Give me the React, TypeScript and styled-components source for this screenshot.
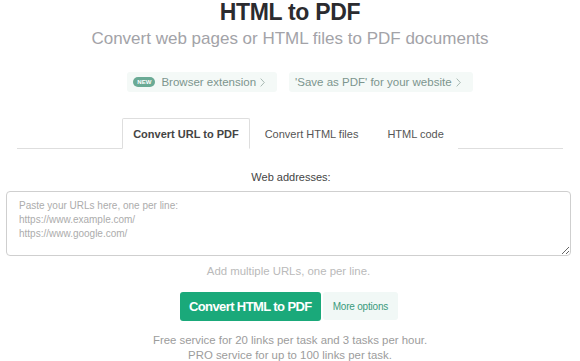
import React from "react";
import styled, { createGlobalStyle } from "styled-components";

const Global = createGlobalStyle`
  html, body { margin: 0; padding: 0; background: #fff; }
  body { font-family: "Liberation Sans", Arial, sans-serif; }
  * { box-sizing: border-box; }
`;

const Page = styled.div`
  width: 580px;
  display: flex;
  flex-direction: column;
  align-items: stretch;
`;

const Title = styled.h1`
  margin: 0;
  font-size: 23px;
  line-height: 24px;
  font-weight: 700;
  color: #2b2b2f;
  text-align: center;
  letter-spacing: -0.3px;
`;

const Subtitle = styled.p`
  margin: 5px 0 0;
  font-size: 17px;
  line-height: 20px;
  color: #a3a3a8;
  text-align: center;
`;

const Links = styled.div`
  display: flex;
  justify-content: center;
  gap: 12px;
  margin-top: 23px;
  padding-left: 20px;
`;

const Pill = styled.a`
  display: flex;
  align-items: center;
  gap: 4px;
  height: 20px;
  padding: 0 12px 0 6px;
  background: #f4f9f7;
  border-radius: 3px;
  color: #7c958e;
  font-size: 11.5px;
  text-decoration: none;
`;

const NewBadge = styled.span`
  display: inline-flex;
  align-items: center;
  justify-content: center;
  width: 22px;
  height: 10px;
  margin-right: 2px;
  border-radius: 5px;
  background: #6aaa95;
  color: #fff;
  font-size: 6px;
  font-weight: 700;
  letter-spacing: 0.2px;
`;

const Chevron = () => (
  <svg width="5" height="9" viewBox="0 0 5 9" fill="none">
    <path d="M0.7 0.6 L4.3 4.5 L0.7 8.4" stroke="#9fb2ac" strokeWidth="0.9" />
  </svg>
);

const Tabs = styled.div`
  display: flex;
  justify-content: center;
  margin: 26px 17px 0 17px;
  border-bottom: 1px solid #dedede;
`;

const Tab = styled.div<{ $active?: boolean }>`
  height: 31px;
  display: flex;
  align-items: center;
  padding: ${(p) => (p.$active ? "0 10px" : "0 13px 0 14px")};
  margin-bottom: -1px;
  font-size: 11px;
  font-weight: ${(p) => (p.$active ? 700 : 400)};
  color: ${(p) => (p.$active ? "#444" : "#555")};
  background: #fff;
  border: 1px solid ${(p) => (p.$active ? "#dedede" : "transparent")};
  border-bottom-color: ${(p) => (p.$active ? "#fff" : "transparent")};
  border-radius: 2px 2px 0 0;
`;

const Label = styled.div`
  margin-top: 21px;
  font-size: 11px;
  line-height: 14px;
  color: #444;
  text-align: center;
  padding-left: 2px;
`;

const AreaWrap = styled.div`
  padding: 0 9px 0 6px;
  margin-top: 7px;
`;

const Area = styled.textarea`
  display: block;
  width: 100%;
  height: 65px;
  resize: vertical;
  border: 1px solid #cfcfcf;
  border-radius: 4px;
  padding: 7px 12px;
  font-family: "Liberation Sans", Arial, sans-serif;
  font-size: 10px;
  line-height: 14px;
  color: #444;
  &::placeholder { color: #acacac; }
`;

const Hint = styled.div`
  margin-top: 8px;
  font-size: 11.4px;
  line-height: 14px;
  color: #bababa;
  text-align: center;
  padding-right: 3px;
`;

const Actions = styled.div`
  display: flex;
  justify-content: center;
  gap: 2px;
  margin-top: 14px;
  padding-right: 2px;
`;

const MainButton = styled.button`
  height: 29px;
  padding: 0 9px;
  border: none;
  border-radius: 3px;
  background: #1aa97a;
  color: #fff;
  font-family: "Liberation Sans", Arial, sans-serif;
  font-size: 13px;
  font-weight: 700;
  letter-spacing: -0.6px;
`;

const MoreButton = styled.button`
  height: 28px;
  padding: 0 10px;
  border: none;
  border-radius: 3px;
  background: #f1f8f6;
  color: #3a9a7c;
  font-family: "Liberation Sans", Arial, sans-serif;
  font-size: 10px;
  letter-spacing: -0.2px;
`;

const Note = styled.div`
  margin-top: 12px;
  font-size: 11.4px;
  line-height: 15px;
  color: #9c9c9c;
  text-align: center;
`;

export default function App() {
  return (
    <>
      <Global />
      <Page>
        <Title>HTML to PDF</Title>
        <Subtitle>Convert web pages or HTML files to PDF documents</Subtitle>
        <Links>
          <Pill>
            <NewBadge>NEW</NewBadge>
            Browser extension
            <Chevron />
          </Pill>
          <Pill>
            'Save as PDF' for your website
            <Chevron />
          </Pill>
        </Links>
        <Tabs>
          <Tab $active>Convert URL to PDF</Tab>
          <Tab>Convert HTML files</Tab>
          <Tab>HTML code</Tab>
        </Tabs>
        <Label>Web addresses:</Label>
        <AreaWrap>
          <Area
            placeholder={"Paste your URLs here, one per line:\nhttps://www.example.com/\nhttps://www.google.com/"}
          />
        </AreaWrap>
        <Hint>Add multiple URLs, one per line.</Hint>
        <Actions>
          <MainButton>Convert HTML to PDF</MainButton>
          <MoreButton>More options</MoreButton>
        </Actions>
        <Note>
          Free service for 20 links per task and 3 tasks per hour.
          <br />
          PRO service for up to 100 links per task.
        </Note>
      </Page>
    </>
  );
}
